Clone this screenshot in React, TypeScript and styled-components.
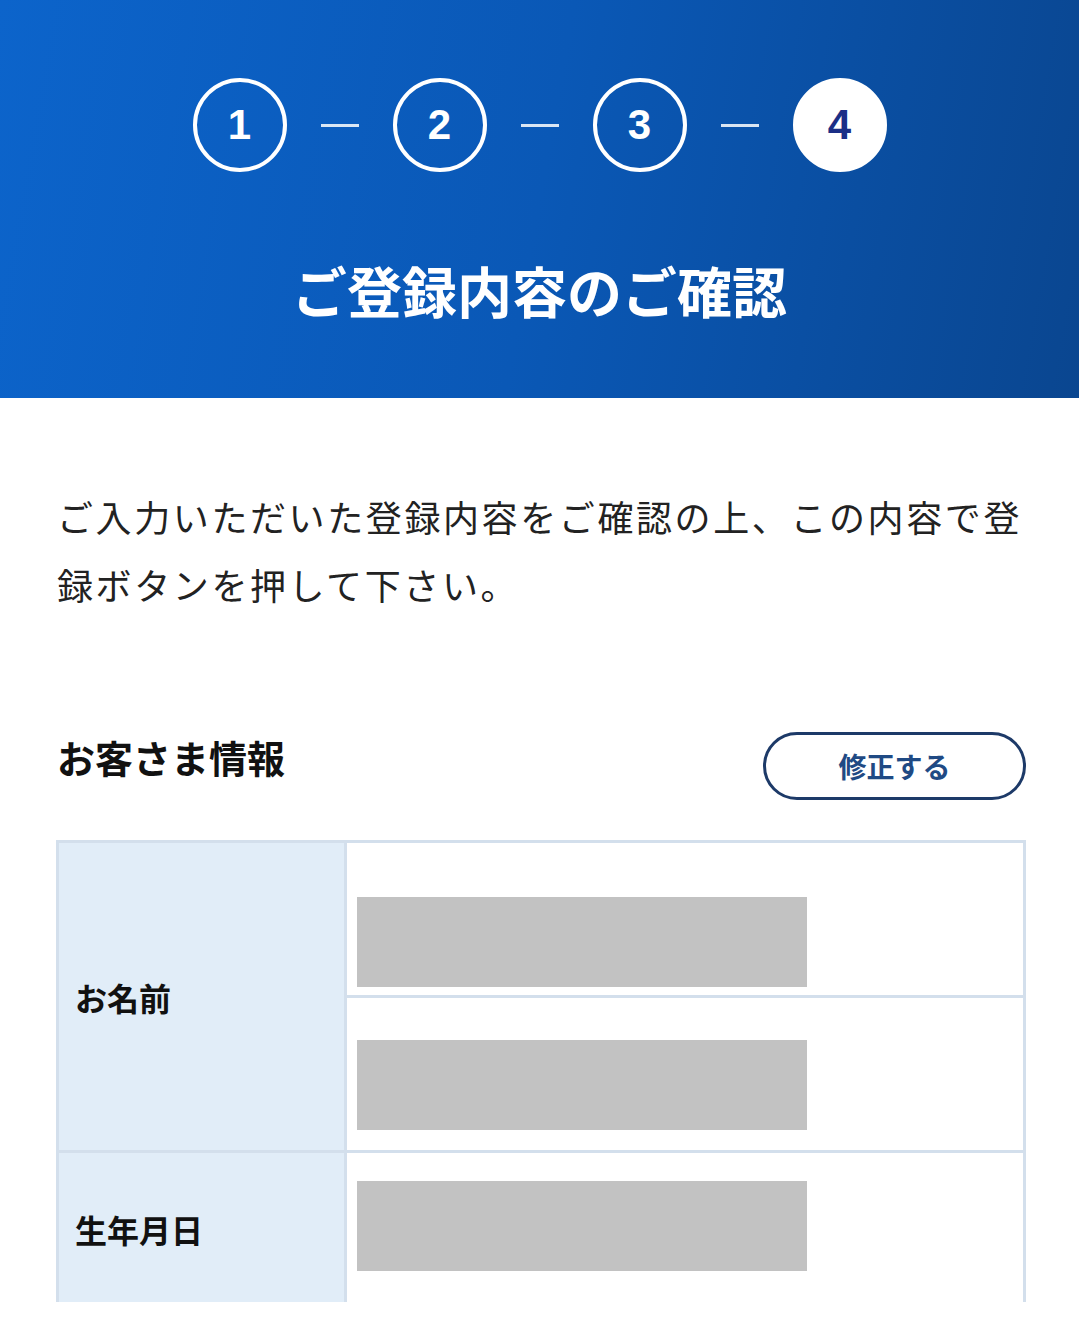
import React from 'react';
import styled, { createGlobalStyle } from 'styled-components';

const GlobalStyle = createGlobalStyle`
  body {
    margin: 0;
    background: #ffffff;
    font-family: "Noto Sans CJK JP", "Noto Sans", sans-serif;
    color: #222;
  }
`;

const Page = styled.div`
  width: 1079px;
  height: 1302px;
  overflow: hidden;
`;

const Hero = styled.header`
  height: 398px;
  box-sizing: border-box;
  padding-top: 78px;
  background: linear-gradient(100deg, #0c64cb 0%, #0a58b6 50%, #0a4690 100%);
  display: flex;
  flex-direction: column;
  align-items: center;
`;

const Steps = styled.ol`
  list-style: none;
  margin: 0;
  padding: 0;
  display: flex;
  align-items: center;
  gap: 34px;
`;

const Step = styled.li<{ $active?: boolean }>`
  width: 94px;
  height: 94px;
  box-sizing: border-box;
  border-radius: 50%;
  border: 4px solid #fff;
  background: ${(p) => (p.$active ? '#fff' : 'transparent')};
  color: ${(p) => (p.$active ? '#1b2f86' : '#fff')};
  display: flex;
  align-items: center;
  justify-content: center;
  font-family: "Liberation Sans", Arial, sans-serif;
  font-weight: 700;
  font-size: 42px;
`;

const Dash = styled.li`
  width: 38px;
  height: 3px;
  background: rgba(255, 255, 255, 0.85);
`;

const Title = styled.h1`
  margin: 90px 0 0;
  color: #fff;
  font-size: 55px;
  font-weight: 700;
  line-height: 1;
  letter-spacing: 0;
`;

const Main = styled.main`
  padding: 84px 55px 0 57px;
`;

const Lead = styled.p`
  margin: 0;
  font-size: 36px;
  letter-spacing: 2.6px;
  line-height: 68px;
  color: #222;
  white-space: nowrap;
`;

const SectionHead = styled.div`
  margin-top: 114px;
  display: flex;
  align-items: flex-start;
  justify-content: space-between;
`;

const SectionTitle = styled.h2`
  margin: 0;
  font-size: 38px;
  font-weight: 700;
  line-height: 50px;
  color: #111;
`;

const EditButton = styled.button`
  width: 263px;
  height: 68px;
  margin-right: -2px;
  border: 3px solid #1d3a68;
  border-radius: 34px;
  background: #fff;
  color: #1f4a84;
  font-family: "Noto Sans CJK JP", sans-serif;
  font-size: 28px;
  font-weight: 700;
  cursor: pointer;
`;

const Table = styled.div`
  margin: 40px -2px 0 -1px;
  border: 3px solid #d3dfec;
  display: grid;
  grid-template-columns: 288px 1fr;
`;

const Label = styled.div<{ $last?: boolean }>`
  background: #e1edf8;
  border-right: 3px solid #d3dfec;
  border-bottom: ${(p) => (p.$last ? 'none' : '3px solid #d3dfec')};
  padding-left: 16px;
  display: flex;
  align-items: center;
  font-size: 32px;
  font-weight: 700;
  color: #111;
`;

const Values = styled.div<{ $last?: boolean }>`
  display: flex;
  flex-direction: column;
  border-bottom: ${(p) => (p.$last ? 'none' : '3px solid #d3dfec')};
`;

const Cell = styled.div<{ $top: number; $bottom: number; $divider?: boolean }>`
  padding: ${(p) => `${p.$top}px 0 ${p.$bottom}px 10px`};
  border-bottom: ${(p) => (p.$divider ? '3px solid #d3dfec' : 'none')};
`;

const Masked = styled.div`
  width: 450px;
  height: 90px;
  background: #c2c2c2;
`;

export default function App() {
  return (
    <Page>
      <GlobalStyle />
      <Hero>
        <Steps>
          <Step>1</Step>
          <Dash />
          <Step>2</Step>
          <Dash />
          <Step>3</Step>
          <Dash />
          <Step $active>4</Step>
        </Steps>
        <Title>ご登録内容のご確認</Title>
      </Hero>
      <Main>
        <Lead>
          ご入力いただいた登録内容をご確認の上、この内容で登
          <br />
          録ボタンを押して下さい。
        </Lead>
        <SectionHead>
          <SectionTitle>お客さま情報</SectionTitle>
          <EditButton type="button">修正する</EditButton>
        </SectionHead>
        <Table>
          <Label>お名前</Label>
          <Values>
            <Cell $top={54} $bottom={8} $divider>
              <Masked />
            </Cell>
            <Cell $top={42} $bottom={20}>
              <Masked />
            </Cell>
          </Values>
          <Label $last>生年月日</Label>
          <Values $last>
            <Cell $top={28} $bottom={34}>
              <Masked />
            </Cell>
          </Values>
        </Table>
      </Main>
    </Page>
  );
}
